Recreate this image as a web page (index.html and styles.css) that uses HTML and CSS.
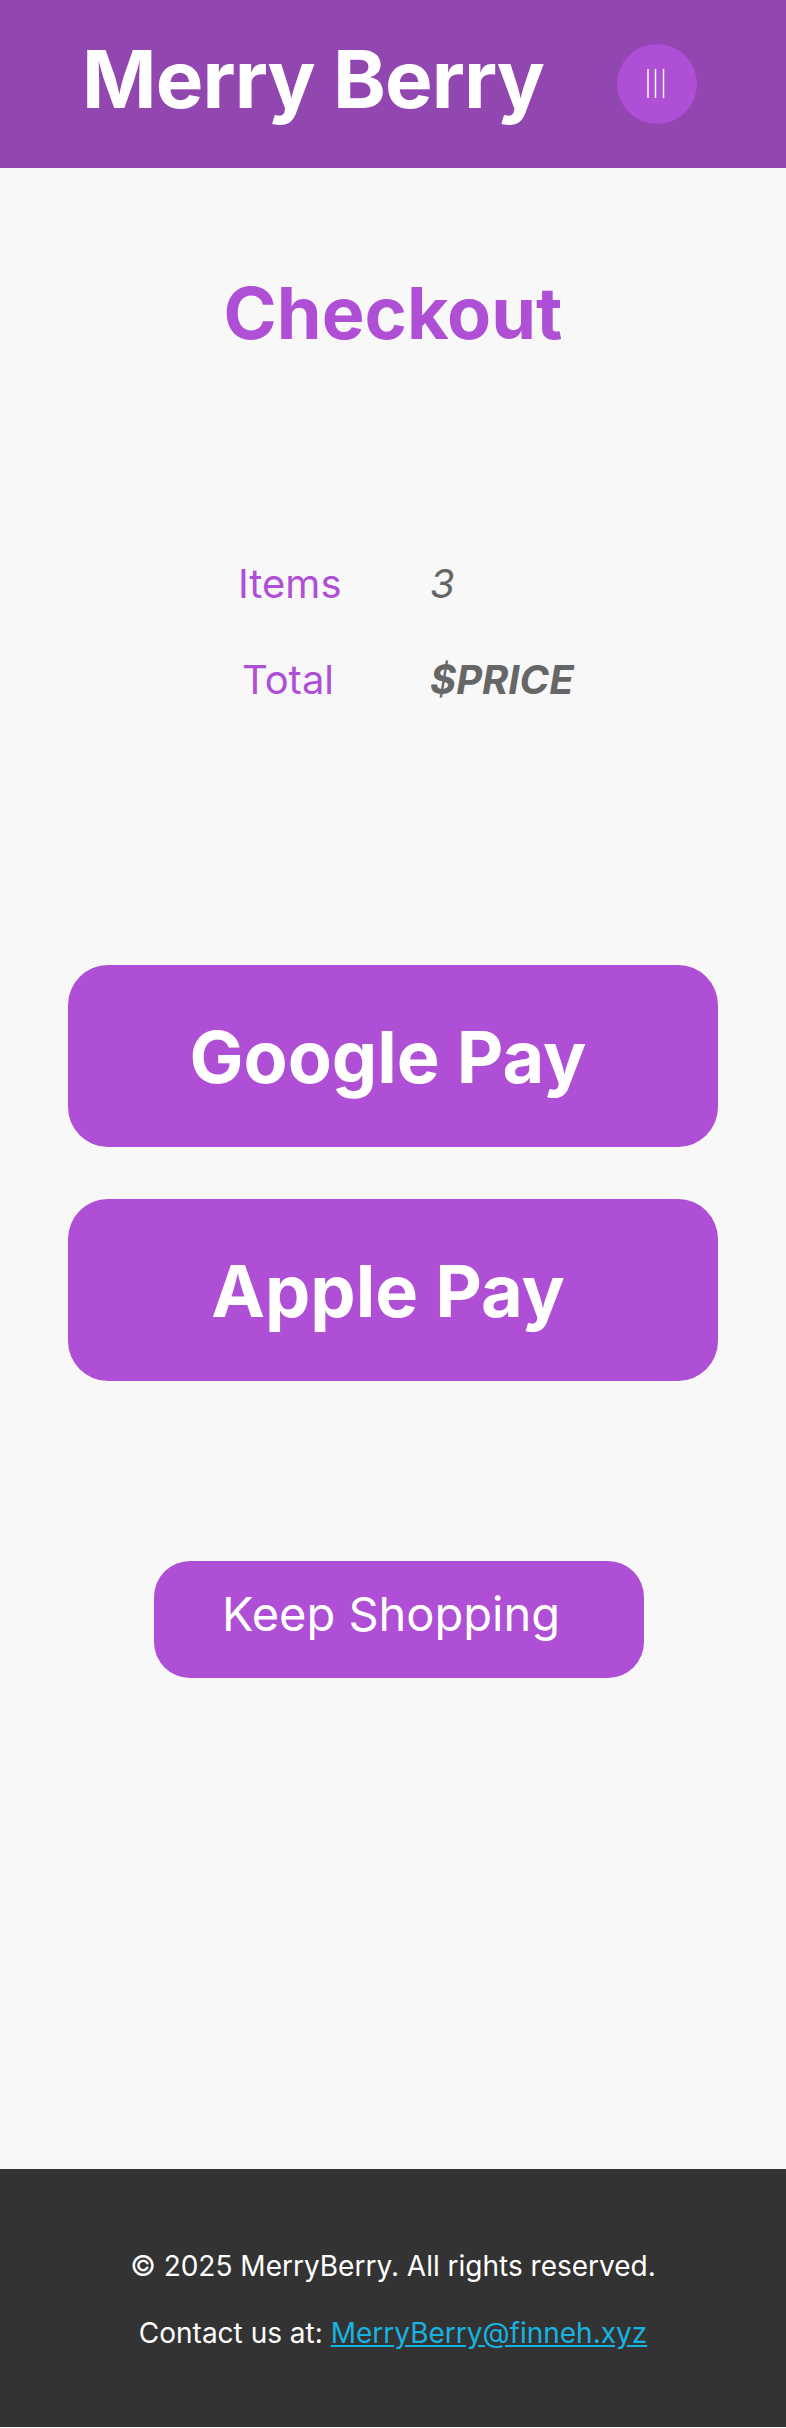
FILE: index.html
```html
<!DOCTYPE html>
<html lang="en">
<head>
<meta charset="utf-8">
<title>Merry Berry - Checkout</title>
<link rel="stylesheet" href="styles.css">
</head>
<body>
<header class="site-header">
  <h1 class="brand">Merry Berry</h1>
  <button class="menu-btn" aria-label="Menu">
    <svg width="80" height="80" viewBox="0 0 80 80" aria-hidden="true">
      <line x1="31" y1="25" x2="31" y2="54" stroke="#fff" stroke-width="1.5"/>
      <line x1="38.5" y1="25" x2="38.5" y2="54" stroke="#fff" stroke-width="1.5"/>
      <line x1="46.5" y1="25" x2="46.5" y2="54" stroke="#fff" stroke-width="1.5"/>
    </svg>
  </button>
</header>
<main class="checkout">
  <h2 class="checkout-title">Checkout</h2>
  <div class="summary">
    <div class="summary-grid">
      <span class="label">Items</span><span class="value">3</span>
      <span class="label">Total</span><span class="value value-strong">$PRICE</span>
    </div>
  </div>
  <div class="pay-list">
    <button class="pay-btn">Google Pay</button>
    <button class="pay-btn">Apple Pay</button>
  </div>
  <div class="keep-wrap">
    <button class="keep-btn">Keep Shopping</button>
  </div>
</main>
<footer class="site-footer">
  <p class="footer-line">© 2025 MerryBerry. All rights reserved.</p>
  <p class="footer-line">Contact us at: <a class="footer-link" href="#">MerryBerry@finneh.xyz</a></p>
</footer>
</body>
</html>
```
FILE: styles.css
```css
* { box-sizing: border-box; }
html, body { margin: 0; padding: 0; }
body {
  font-family: Inter, "Noto Sans", "Liberation Sans", sans-serif;
  background: #f8f8f8;
  color: #333;
}
.site-header {
  height: 168px;
  background: #9146b0;
  display: flex;
  align-items: center;
  padding-left: 82px;
  gap: 73px;
}
.brand {
  margin: 0 0 9px 0;
  font-size: 80px;
  font-weight: 700;
  color: #fff;
  line-height: 1.21;
  letter-spacing: -0.9px;
}
.menu-btn {
  width: 80px;
  height: 80px;
  border-radius: 50%;
  border: 0;
  padding: 0;
  background: #ae4fd5;
  display: block;
}
.menu-btn svg { display: block; }
.checkout {
  padding: 101px 0 491px;
  display: flex;
  flex-direction: column;
}
.checkout-title {
  margin: 0;
  text-align: center;
  font-size: 72px;
  font-weight: 700;
  line-height: 1.21;
  color: #ae4fd5;
}
.summary {
  margin-top: 180px;
  padding-left: 238px;
}
.summary-grid {
  display: grid;
  grid-template-columns: 100px auto;
  column-gap: 92px;
  justify-content: start;
  font-size: 40px;
  line-height: 96px;
}
.label {
  color: #ae4fd5;
  text-align: center;
}
.value {
  color: #666;
  font-style: italic;
}
.value-strong { font-weight: 700; }
.pay-list {
  margin-top: 237px;
  display: flex;
  flex-direction: column;
  gap: 52px;
  padding: 0 68px;
}
.pay-btn {
  height: 182px;
  border: 0;
  border-radius: 40px;
  background: #ae4fd5;
  color: #fff;
  font-family: inherit;
  font-size: 72px;
  font-weight: 700;
  padding: 0 10px 0 0;
}
.keep-wrap {
  margin-top: 180px;
  padding-left: 154px;
}
.keep-btn {
  width: 490px;
  height: 117px;
  border: 0;
  border-radius: 36px;
  background: #ae4fd5;
  color: #fff;
  font-family: inherit;
  font-size: 47px;
  font-weight: 400;
  padding: 0 16px 12px 0;
}
.site-footer {
  background: #333;
  height: 258px;
  padding-top: 80px;
  text-align: center;
  color: #fff;
}
.footer-line {
  margin: 0 0 33px;
  font-size: 28px;
}
.footer-link { color: #17b3e0; }
```
